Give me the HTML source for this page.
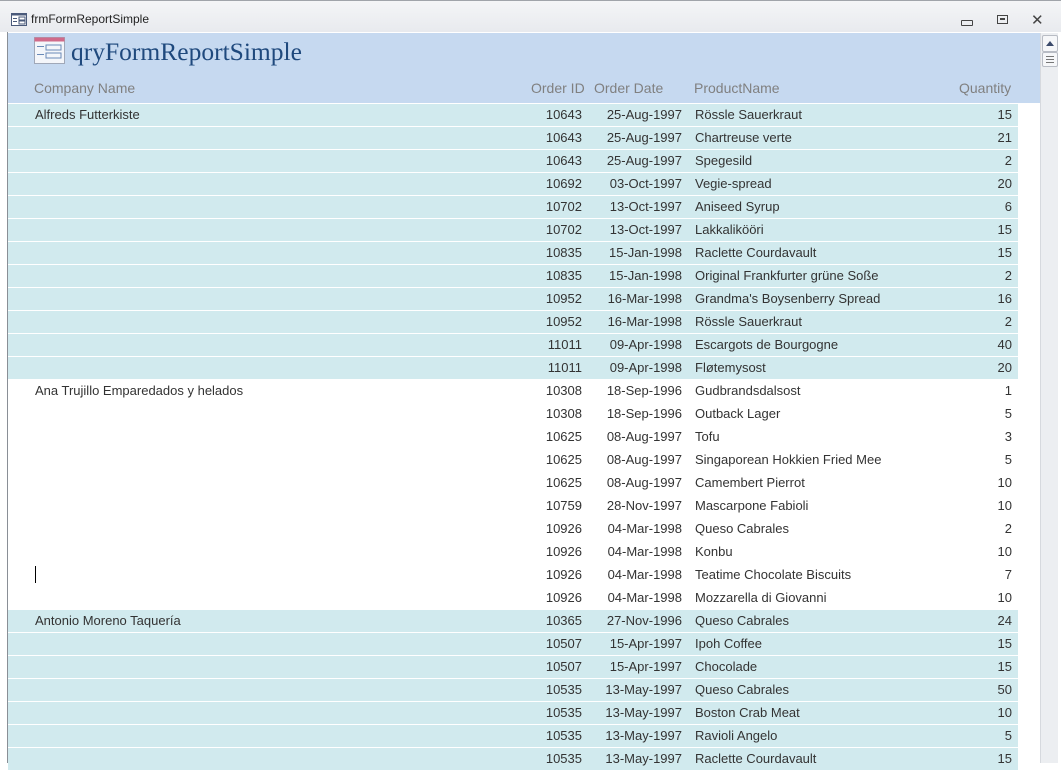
<!DOCTYPE html>
<html><head><meta charset="utf-8"><style>
body{margin:0;width:1061px;height:763px;overflow:hidden;background:#fff;font-family:"Liberation Sans",sans-serif;position:relative}
.tb{position:absolute;left:0;top:0;width:1061px;height:32px;background:linear-gradient(#f4f5f7,#e8eaee);border-top:1px solid #a0a4aa;box-sizing:border-box}
.tb .t{position:absolute;left:31px;top:11px;font-size:12px;color:#222}
.hdr{position:absolute;left:8px;top:33px;width:1032px;height:70px;background:#c6d9f0}
.title{position:absolute;left:71px;top:37px;font-family:"Liberation Serif",serif;font-size:25.5px;color:#1f497d}
.lab{position:absolute;top:80px;font-size:14px;color:#808080}
.row{position:absolute;left:8px;width:1010px;height:22px;font-size:13px;color:#333}
.row span{position:absolute;top:3px;white-space:nowrap}
.sh{background:#d1eaee}
.sb{position:absolute;left:1040px;top:33px;width:17px;height:730px;background:#eceef1;border-left:1px solid #d6d9de}
.lf{position:absolute;left:7px;top:32px;width:1px;height:731px;background:#8a8f96}
</style></head><body>
<div class="tb">
<svg style="position:absolute;left:11px;top:12px" width="16" height="13"><rect x="0.5" y="0.5" width="15" height="12" fill="#fff" stroke="#4a5a7a"/><rect x="0.5" y="0.5" width="15" height="2" fill="#4a5a7a"/><rect x="2" y="5" width="4" height="1" fill="#4a5a7a"/><rect x="2" y="8" width="4" height="1" fill="#4a5a7a"/><rect x="8" y="4" width="6" height="3" fill="none" stroke="#4a5a7a"/><rect x="8" y="8" width="6" height="3" fill="none" stroke="#4a5a7a"/></svg>
<div class="t">frmFormReportSimple</div>
<div style="position:absolute;left:961px;top:19px;width:10px;height:4px;border:1px solid #444;border-radius:1px"></div>
<div style="position:absolute;left:997px;top:14px;width:9px;height:7px;border:1px solid #444"><div style="margin:2px 2px;width:5px;height:2px;background:#444"></div></div>
<div style="position:absolute;left:1031px;top:10px;font-size:15px;color:#444">✕</div>
</div>
<div class="lf"></div>
<div class="hdr"></div>
<svg style="position:absolute;left:34px;top:37px" width="31" height="27"><rect x="0.5" y="0.5" width="30" height="26" fill="#f4f6fa" stroke="#a0a8b8"/><rect x="0.5" y="0.5" width="30" height="4" fill="#d06a8a"/><rect x="3" y="9" width="7" height="1" fill="#6a8ab8"/><rect x="3" y="17" width="7" height="1" fill="#6a8ab8"/><rect x="12" y="8" width="15" height="5" fill="none" stroke="#6a8ab8"/><rect x="12" y="16" width="15" height="5" fill="none" stroke="#6a8ab8"/></svg>
<div class="title">qryFormReportSimple</div>
<div class="lab" style="left:34px">Company Name</div>
<div class="lab" style="left:531px">Order ID</div>
<div class="lab" style="left:594px">Order Date</div>
<div class="lab" style="left:694px">ProductName</div>
<div class="lab" style="left:959px">Quantity</div>
<div class="sb">
<div style="position:absolute;left:1px;top:2px;width:14px;height:15px;border:1px solid #b8bcc4;background:#f6f7f9;border-radius:2px"><div style="margin:5px auto 0;width:0;height:0;border-left:4px solid transparent;border-right:4px solid transparent;border-bottom:5px solid #3b4a6b"></div></div>
<div style="position:absolute;left:1px;top:19px;width:14px;height:13px;border:1px solid #b8bcc4;background:#f6f7f9;border-radius:2px"><div style="margin:3px 3px;width:8px;height:5px;border-top:1px solid #777;border-bottom:1px solid #777"><div style="margin-top:2px;height:1px;background:#777"></div></div></div>
</div>
<div id="rows"></div>
<script>
var d=[["Alfreds Futterkiste",10643,"25-Aug-1997","Rössle Sauerkraut",15,1],["",10643,"25-Aug-1997","Chartreuse verte",21,1],["",10643,"25-Aug-1997","Spegesild",2,1],["",10692,"03-Oct-1997","Vegie-spread",20,1],["",10702,"13-Oct-1997","Aniseed Syrup",6,1],["",10702,"13-Oct-1997","Lakkalikööri",15,1],["",10835,"15-Jan-1998","Raclette Courdavault",15,1],["",10835,"15-Jan-1998","Original Frankfurter grüne Soße",2,1],["",10952,"16-Mar-1998","Grandma's Boysenberry Spread",16,1],["",10952,"16-Mar-1998","Rössle Sauerkraut",2,1],["",11011,"09-Apr-1998","Escargots de Bourgogne",40,1],["",11011,"09-Apr-1998","Fløtemysost",20,1],
["Ana Trujillo Emparedados y helados",10308,"18-Sep-1996","Gudbrandsdalsost",1,0],["",10308,"18-Sep-1996","Outback Lager",5,0],["",10625,"08-Aug-1997","Tofu",3,0],["",10625,"08-Aug-1997","Singaporean Hokkien Fried Mee",5,0],["",10625,"08-Aug-1997","Camembert Pierrot",10,0],["",10759,"28-Nov-1997","Mascarpone Fabioli",10,0],["",10926,"04-Mar-1998","Queso Cabrales",2,0],["",10926,"04-Mar-1998","Konbu",10,0],["|",10926,"04-Mar-1998","Teatime Chocolate Biscuits",7,0],["",10926,"04-Mar-1998","Mozzarella di Giovanni",10,0],
["Antonio Moreno Taquería",10365,"27-Nov-1996","Queso Cabrales",24,1],["",10507,"15-Apr-1997","Ipoh Coffee",15,1],["",10507,"15-Apr-1997","Chocolade",15,1],["",10535,"13-May-1997","Queso Cabrales",50,1],["",10535,"13-May-1997","Boston Crab Meat",10,1],["",10535,"13-May-1997","Ravioli Angelo",5,1],["",10535,"13-May-1997","Raclette Courdavault",15,1]];
var h="";d.forEach(function(r,i){var y=104+23*i;var c=r[0]=="|"?'<span style="left:27px;top:2px;width:1px;height:17px;background:#000"></span>':'<span style="left:27px;width:217px;overflow:hidden">'+r[0]+'</span>';
h+='<div class="row'+(r[5]?' sh':'')+'" style="top:'+y+'px">'+c+'<span style="right:436px">'+r[1]+'</span><span style="right:336px">'+r[2]+'</span><span style="left:687px">'+r[3]+'</span><span style="right:6px">'+r[4]+'</span></div>';});
document.getElementById("rows").innerHTML=h;
</script>
</body></html>
